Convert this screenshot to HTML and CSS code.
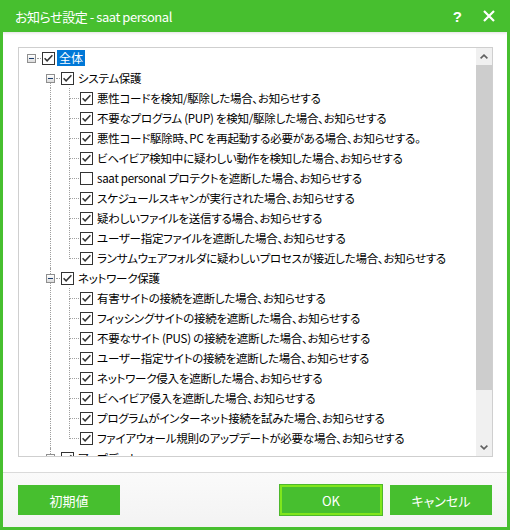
FILE: index.html
```html
<!DOCTYPE html>
<html lang="ja">
<head>
<meta charset="utf-8">
<title>お知らせ設定</title>
<link rel="stylesheet" href="styles.css">
</head>
<body>
<svg class="defs" width="0" height="0">
  <symbol id="chk" viewBox="0 0 13 13">
    <rect x="0.5" y="0.5" width="12" height="12" fill="#fff" stroke="#333"/>
    <path d="M2.6 6.2 L5.1 8.8 L10.4 3.2" fill="none" stroke="#333" stroke-width="1.5"/>
  </symbol>
  <symbol id="unchk" viewBox="0 0 13 13">
    <rect x="0.5" y="0.5" width="12" height="12" fill="#fff" stroke="#333"/>
  </symbol>
</svg>
<div class="window">
  <div class="titlebar">
    <span class="title">お知らせ設定 - saat personal</span>
    <span class="help">?</span>
    <svg class="close" width="12" height="12" viewBox="0 0 12 12"><path d="M1 1 L11 11 M11 1 L1 11" stroke="#fff" stroke-width="2.2"/></svg>
  </div>
  <div class="client">
    <div class="treebox">
      <div class="tree">
        <div class="row"><span class="cell exp"><i></i><span class="pm"><em></em></span><i></i></span><svg class="cb"><use href="#chk"/></svg><span class="lbl sel">全体</span></div>
        <div class="row"><span class="cell"></span><span class="cell exp dn"><i></i><span class="pm"><em></em></span><i></i></span><svg class="cb"><use href="#chk"/></svg><span class="lbl">システム保護</span></div>
        <div class="row"><span class="cell"></span><span class="cell pass"><i></i><i></i></span><span class="cell tee"><i></i><i></i></span><svg class="cb"><use href="#chk"/></svg><span class="lbl">悪性コードを検知/駆除した場合、お知らせする</span></div>
        <div class="row"><span class="cell"></span><span class="cell pass"><i></i><i></i></span><span class="cell tee"><i></i><i></i></span><svg class="cb"><use href="#chk"/></svg><span class="lbl">不要なプログラム (PUP) を検知/駆除した場合、お知らせする</span></div>
        <div class="row"><span class="cell"></span><span class="cell pass"><i></i><i></i></span><span class="cell tee"><i></i><i></i></span><svg class="cb"><use href="#chk"/></svg><span class="lbl">悪性コード駆除時、PC を再起動する必要がある場合、お知らせする。</span></div>
        <div class="row"><span class="cell"></span><span class="cell pass"><i></i><i></i></span><span class="cell tee"><i></i><i></i></span><svg class="cb"><use href="#chk"/></svg><span class="lbl">ビヘイビア検知中に疑わしい動作を検知した場合、お知らせする</span></div>
        <div class="row"><span class="cell"></span><span class="cell pass"><i></i><i></i></span><span class="cell tee"><i></i><i></i></span><svg class="cb"><use href="#unchk"/></svg><span class="lbl">saat personal プロテクトを遮断した場合、お知らせする</span></div>
        <div class="row"><span class="cell"></span><span class="cell pass"><i></i><i></i></span><span class="cell tee"><i></i><i></i></span><svg class="cb"><use href="#chk"/></svg><span class="lbl">スケジュールスキャンが実行された場合、お知らせする</span></div>
        <div class="row"><span class="cell"></span><span class="cell pass"><i></i><i></i></span><span class="cell tee"><i></i><i></i></span><svg class="cb"><use href="#chk"/></svg><span class="lbl">疑わしいファイルを送信する場合、お知らせする</span></div>
        <div class="row"><span class="cell"></span><span class="cell pass"><i></i><i></i></span><span class="cell tee"><i></i><i></i></span><svg class="cb"><use href="#chk"/></svg><span class="lbl">ユーザー指定ファイルを遮断した場合、お知らせする</span></div>
        <div class="row"><span class="cell"></span><span class="cell pass"><i></i><i></i></span><span class="cell ell"><i></i><i></i></span><svg class="cb"><use href="#chk"/></svg><span class="lbl">ランサムウェアフォルダに疑わしいプロセスが接近した場合、お知らせする</span></div>
        <div class="row"><span class="cell"></span><span class="cell exp up dn"><i></i><span class="pm"><em></em></span><i></i></span><svg class="cb"><use href="#chk"/></svg><span class="lbl">ネットワーク保護</span></div>
        <div class="row"><span class="cell"></span><span class="cell pass"><i></i><i></i></span><span class="cell tee"><i></i><i></i></span><svg class="cb"><use href="#chk"/></svg><span class="lbl">有害サイトの接続を遮断した場合、お知らせする</span></div>
        <div class="row"><span class="cell"></span><span class="cell pass"><i></i><i></i></span><span class="cell tee"><i></i><i></i></span><svg class="cb"><use href="#chk"/></svg><span class="lbl">フィッシングサイトの接続を遮断した場合、お知らせする</span></div>
        <div class="row"><span class="cell"></span><span class="cell pass"><i></i><i></i></span><span class="cell tee"><i></i><i></i></span><svg class="cb"><use href="#chk"/></svg><span class="lbl">不要なサイト (PUS) の接続を遮断した場合、お知らせする</span></div>
        <div class="row"><span class="cell"></span><span class="cell pass"><i></i><i></i></span><span class="cell tee"><i></i><i></i></span><svg class="cb"><use href="#chk"/></svg><span class="lbl">ユーザー指定サイトの接続を遮断した場合、お知らせする</span></div>
        <div class="row"><span class="cell"></span><span class="cell pass"><i></i><i></i></span><span class="cell tee"><i></i><i></i></span><svg class="cb"><use href="#chk"/></svg><span class="lbl">ネットワーク侵入を遮断した場合、お知らせする</span></div>
        <div class="row"><span class="cell"></span><span class="cell pass"><i></i><i></i></span><span class="cell tee"><i></i><i></i></span><svg class="cb"><use href="#chk"/></svg><span class="lbl">ビヘイビア侵入を遮断した場合、お知らせする</span></div>
        <div class="row"><span class="cell"></span><span class="cell pass"><i></i><i></i></span><span class="cell tee"><i></i><i></i></span><svg class="cb"><use href="#chk"/></svg><span class="lbl">プログラムがインターネット接続を試みた場合、お知らせする</span></div>
        <div class="row"><span class="cell"></span><span class="cell pass"><i></i><i></i></span><span class="cell ell"><i></i><i></i></span><svg class="cb"><use href="#chk"/></svg><span class="lbl">ファイアウォール規則のアップデートが必要な場合、お知らせする</span></div>
        <div class="row"><span class="cell"></span><span class="cell exp up"><i></i><span class="pm"><em></em></span><i></i></span><svg class="cb"><use href="#chk"/></svg><span class="lbl">アップデート</span></div>
      </div>
      <div class="scrollbar">
        <div class="arrow"><svg width="8" height="5" viewBox="0 0 8 5"><path d="M0.6 4.4 L4 1.1 L7.4 4.4" fill="none" stroke="#606060" stroke-width="1.6"/></svg></div>
        <div class="thumb"></div>
        <div class="track"></div>
        <div class="arrow"><svg width="8" height="5" viewBox="0 0 8 5"><path d="M0.6 0.6 L4 3.9 L7.4 0.6" fill="none" stroke="#606060" stroke-width="1.6"/></svg></div>
      </div>
    </div>
    <div class="footer">
      <button class="btn">初期値</button>
      <span class="spacer"></span>
      <button class="btn ok">OK</button>
      <button class="btn">キャンセル</button>
    </div>
  </div>
</div>
</body>
</html>
```

FILE: styles.css
```css
html, body {
  margin: 0;
  padding: 0;
  background: #fff;
}
.defs {
  display: block;
  width: 0;
  height: 0;
  overflow: hidden;
}
.window {
  width: 510px;
  height: 530px;
  box-sizing: border-box;
  background: #47bf2f;
  padding: 0 3px 3px 3px;
  display: flex;
  flex-direction: column;
  font-family: "Noto Sans CJK JP", "Noto Sans", sans-serif;
  font-feature-settings: "palt";
}
.titlebar {
  height: 32px;
  flex: none;
  display: flex;
  align-items: center;
  padding-left: 12px;
  color: #fff;
}
.title {
  font-size: 13px;
  letter-spacing: -0.45px;
}
.help {
  margin-left: auto;
  font-family: "Liberation Sans", sans-serif;
  font-weight: bold;
  font-size: 15px;
  line-height: 15px;
  margin-right: 21px;
}
.close {
  margin-right: 12px;
}
.client {
  flex: 1;
  background: #fff;
  display: flex;
  flex-direction: column;
  box-shadow: inset 0 3px 3px -2px rgba(0, 0, 0, 0.12);
}
.treebox {
  margin: 15px 14px 0 15px;
  height: 410px;
  box-sizing: border-box;
  border: 1px solid #cfcfcf;
  display: flex;
  flex: none;
}
.tree {
  flex: 1;
  overflow: hidden;
  padding-left: 3px;
}
.row {
  height: 20px;
  display: flex;
  align-items: center;
  white-space: nowrap;
}
.cell {
  width: 19px;
  height: 20px;
  flex: none;
  display: flex;
  flex-direction: column;
}
.cell i {
  display: block;
  margin-left: 9px;
  box-sizing: border-box;
}
.cell i:first-child {
  height: 11px;
}
.cell i:last-child {
  height: 9px;
}
.pass i,
.tee i,
.ell i:first-child {
  border-left: 1px dotted #a0a0a0;
}
.tee i:first-child,
.ell i:first-child {
  border-bottom: 1px dotted #a0a0a0;
}
.exp i:first-child {
  height: 6px;
}
.exp i:last-child {
  height: 5px;
}
.exp.up i:first-child,
.exp.dn i:last-child {
  border-left: 1px dotted #a0a0a0;
}
.pm {
  height: 9px;
  display: flex;
}
.pm em {
  display: block;
  width: 9px;
  height: 9px;
  box-sizing: border-box;
  margin-left: 5px;
  border: 1px solid #8f8f8f;
  background:
    linear-gradient(#1e3f6e, #1e3f6e) center / 5px 1px no-repeat,
    linear-gradient(#ffffff, #dcdcdc);
}
.pm::after {
  content: "";
  flex: 1;
  height: 0;
  margin-top: 4px;
  margin-left: 1px;
  border-top: 1px dotted #a0a0a0;
}
.cb {
  width: 13px;
  height: 13px;
  flex: none;
  margin-left: 1px;
}
.lbl {
  margin-left: 2px;
  padding: 0 2px;
  font-size: 11.5px;
  letter-spacing: -0.25px;
  line-height: 16px;
  height: 16px;
  color: #000;
}
.lbl.sel {
  background: #0078d7;
  color: #fff;
  padding: 0 2px 0 2px;
  font-size: 12px;
  letter-spacing: 0;
}
.scrollbar {
  width: 16px;
  flex: none;
  background: #f0f0f0;
  display: flex;
  flex-direction: column;
}
.arrow {
  height: 17px;
  flex: none;
  display: flex;
  align-items: center;
  justify-content: center;
}
.thumb {
  height: 325px;
  flex: none;
  background: #cdcdcd;
}
.track {
  flex: 1;
}
.footer {
  margin-top: 15px;
  flex: 1;
  border-top: 1px solid #dadada;
  background: linear-gradient(#fafafa, #f3f3f3);
  display: flex;
  align-items: flex-start;
  padding: 12px 15px 0 15px;
  gap: 8px;
}
.spacer {
  flex: 1;
}
.btn {
  width: 102px;
  height: 30px;
  box-sizing: border-box;
  border: 0;
  background: #47bf2f;
  color: #fff;
  font-family: "Noto Sans CJK JP", "Noto Sans", sans-serif;
  font-feature-settings: "palt";
  font-size: 13px;
  padding: 0;
}
.btn.ok {
  border: 2px solid #80e61c;
  box-shadow: 0 0 0 1px #4db82d;
}
```
